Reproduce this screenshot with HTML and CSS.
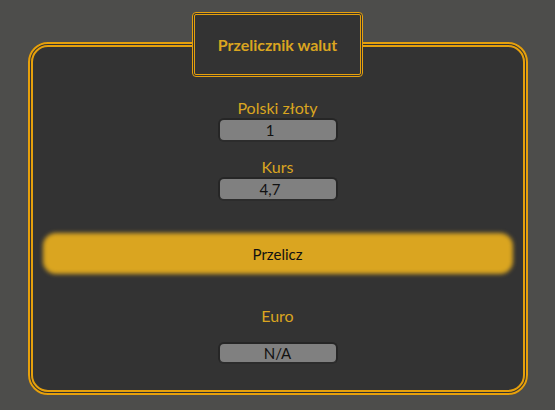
FILE: index.html
```html
<!DOCTYPE html>
<html lang="pl">
<head>
<meta charset="utf-8">
<title>Przelicznik walut</title>
<link rel="stylesheet" href="styles.css">
</head>
<body>
<main class="page">
  <fieldset class="converter">
    <legend class="title">Przelicznik walut</legend>
    <label class="field-label first" for="pln">Polski złoty</label>
    <input class="field num" id="pln" type="text" value="1">
    <label class="field-label" for="rate">Kurs</label>
    <input class="field num" id="rate" type="text" value="4,7">
    <button class="convert" type="button">Przelicz</button>
    <label class="field-label euro" for="eur">Euro</label>
    <output class="field result" id="eur">N/A</output>
  </fieldset>
</main>
</body>
</html>
```
FILE: styles.css
```css
html {
  background: #4d4d4b;
}
body {
  margin: 0;
  font-family: Lato, "Open Sans", sans-serif;
}
.page {
  padding-top: 12px;
}
.converter {
  box-sizing: border-box;
  width: 500px;
  margin: 0 auto;
  padding: 0 10px 26px;
  min-inline-size: 0;
  border: 5px double #e6a00c;
  border-radius: 20px;
  background: #333333;
  display: flex;
  flex-direction: column;
  align-items: center;
}
.title {
  margin: 0 auto;
  padding: 20px 23px;
  border: 3px double #e6a00c;
  border-radius: 4px;
  background: #333333;
  color: #daa520;
  font-weight: 700;
  font-size: 16px;
  line-height: 19px;
}
.field-label {
  display: block;
  color: #daa520;
  font-size: 16px;
  line-height: 19px;
  margin: 15px 0 1px;
}
.field-label.first {
  margin-top: 21px;
}
.field-label.euro {
  margin: 32px 0 17px;
}
.field {
  box-sizing: border-box;
  display: block;
  width: 120px;
  height: 24px;
  margin: 0;
  border: 2px solid #262626;
  border-bottom-color: #2c2c2c;
  border-radius: 6px;
  background: #808080;
  color: #111;
  font-family: Lato, "Open Sans", sans-serif;
  font-size: 15px;
  text-align: center;
  outline: none;
}
.field.num {
  padding: 0 15px 0 0;
}
.field.result {
  height: 22px;
  line-height: 18px;
}
.convert {
  position: relative;
  isolation: isolate;
  align-self: stretch;
  height: 41px;
  margin: 32px 0 0;
  border: 0;
  background: transparent;
  color: #111;
  font-family: Lato, "Open Sans", sans-serif;
  font-size: 15px;
}
.convert::before {
  content: "";
  position: absolute;
  inset: 0;
  z-index: -1;
  border-radius: 13px;
  background: #daa520;
  filter: blur(2px);
}
```
